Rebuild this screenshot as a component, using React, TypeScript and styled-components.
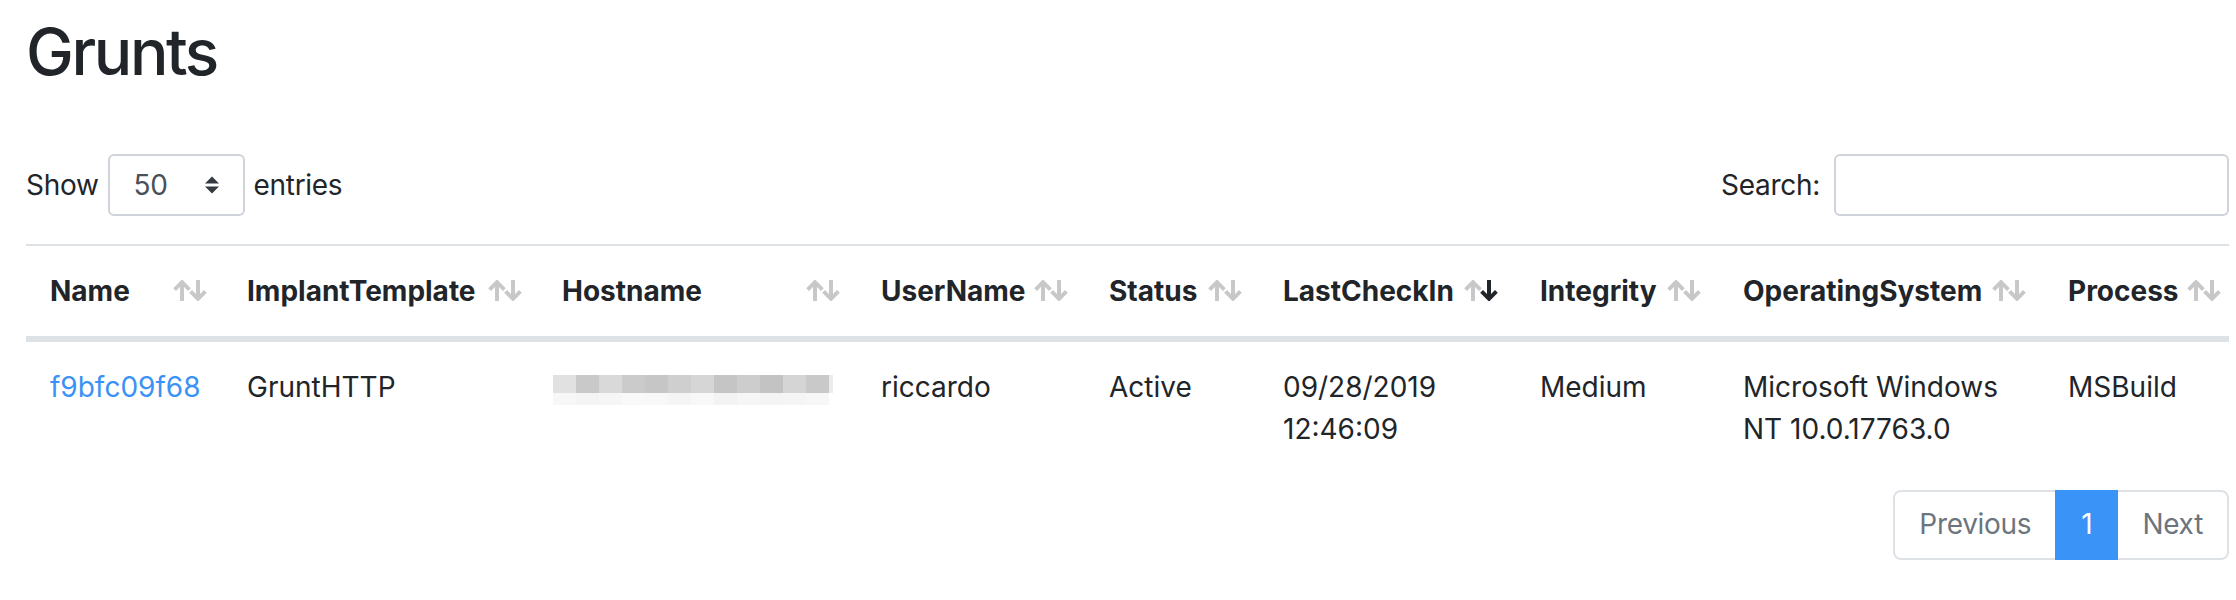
import React from "react";
import styled, { createGlobalStyle } from "styled-components";

const GlobalStyle = createGlobalStyle`
  html, body { margin: 0; padding: 0; background: #ffffff; }
  body {
    font-family: Inter, "Liberation Sans", sans-serif;
    color: #212529;
    font-size: 28px;
    line-height: 1.5;
  }
  * { box-sizing: border-box; }
`;

const Page = styled.div`
  padding: 14px 7px 40px 26px;
`;

const Title = styled.h1`
  margin: 0 0 63px;
  font-size: 64px;
  font-weight: 500;
  line-height: 1.2;
  letter-spacing: -2.4px;
  color: #212529;
`;

const Controls = styled.div`
  display: flex;
  justify-content: space-between;
  align-items: center;
  height: 62px;
  margin-bottom: 28px;
`;

const Label = styled.label<{ $gap: number }>`
  display: flex;
  align-items: center;
  gap: ${(p) => p.$gap}px;
  white-space: nowrap;
  font-weight: 400;
  letter-spacing: -0.3px;
`;

const SelectBox = styled.div`
  display: flex;
  align-items: center;
  justify-content: space-between;
  width: 137px;
  height: 62px;
  padding: 0 23px 0 24px;
  border: 2px solid #ced4da;
  border-radius: 6px;
  color: #495057;
  background: #fff;
`;

const SearchInput = styled.input`
  width: 395px;
  height: 62px;
  border: 2px solid #ced4da;
  border-radius: 6px;
  background: #fff;
  font: inherit;
  padding: 0 16px;
  outline: none;
`;

const Table = styled.table`
  width: 2203px;
  table-layout: fixed;
  border-collapse: separate;
  border-spacing: 0;
  color: #212529;
`;

const HeadCell = styled.th`
  position: relative;
  text-align: left;
  font-weight: 700;
  white-space: nowrap;
  vertical-align: bottom;
  padding: 24px 60px 24px 24px;
  line-height: 42px;
  border-top: 2px solid #dee2e6;
  border-bottom: 4px solid #dee2e6;
`;

const BodyCell = styled.td`
  vertical-align: top;
  padding: 24px;
  line-height: 42px;
  border-top: 2px solid #dee2e6;
`;

const SortIcon = styled.svg<{ $right: number }>`
  position: absolute;
  top: 34px;
  right: ${(p) => p.$right}px;
  width: 34px;
  height: 21px;
`;

const Link = styled.a`
  color: #3a92f4;
  text-decoration: none;
`;

const Blur = styled.svg`
  display: block;
  margin: 9px 0 0 -9px;
`;

const Footer = styled.div`
  display: flex;
  justify-content: flex-end;
  margin-top: 16px;
`;

const Pager = styled.ul`
  display: flex;
  margin: 0;
  padding: 0;
  list-style: none;
`;

const PageLink = styled.li<{ $active?: boolean; $pos?: "first" | "last" }>`
  display: flex;
  align-items: center;
  height: 70px;
  padding: 0 24px;
  line-height: 1.25;
  letter-spacing: -0.3px;
  color: ${(p) => (p.$active ? "#ffffff" : "#6c757d")};
  background: ${(p) => (p.$active ? "#3a93f6" : "#ffffff")};
  border: 2px solid ${(p) => (p.$active ? "#3a93f6" : "#dee2e6")};
  margin-left: ${(p) => (p.$pos === "first" ? "0" : "-2px")};
  border-radius: ${(p) =>
    p.$pos === "first" ? "8px 0 0 8px" : p.$pos === "last" ? "0 8px 8px 0" : "0"};
  position: relative;
  z-index: ${(p) => (p.$active ? 1 : 0)};
`;

const Arrows = () => (
  <svg width="16" height="18" viewBox="0 0 16 18">
    <path d="M1 7.5 L8 0.5 L15 7.5 Z" fill="#343a40" />
    <path d="M1 10.5 L8 17.5 L15 10.5 Z" fill="#343a40" />
  </svg>
);

const Sort = ({ right, active }: { right: number; active?: boolean }) => (
  <SortIcon $right={right} viewBox="0 0 34 21">
    <g fill="none" strokeWidth="4" strokeLinejoin="miter">
      <g stroke="#c8c8c8">
        <path d="M9 2.5 V21" />
        <path d="M1.6 9.6 L9 2.2 L16.4 9.6" />
      </g>
      <g stroke={active ? "#212529" : "#c8c8c8"}>
        <path d="M25 0 V18.5" />
        <path d="M17.6 11.4 L25 18.8 L32.4 11.4" />
      </g>
    </g>
  </SortIcon>
);

const topShades = ["#e1e1e1", "#c9c9c9", "#d9d9d9", "#cbcbcb", "#c6c6c6", "#cfcfcf", "#d6d6d6", "#c5c5c5", "#cdcdcd", "#c3c3c3", "#d5d5d5", "#c9c9c9", "#ececec"];
const bottomShades = ["#f7f7f7", "#f4f4f4", "#f6f6f6", "#f9f9f9", "#f8f8f8", "#f5f5f5", "#f8f8f8", "#f3f3f3", "#f6f6f6", "#f4f4f4", "#f5f5f5", "#f7f7f7", "#ffffff"];

const HostBlur = () => (
  <Blur width="280" height="30" viewBox="0 0 280 30">
    {topShades.map((c, i) => (
      <rect key={"t" + i} x={i * 23} y={0} width={i === 12 ? 4 : 23} height={18} fill={c} />
    ))}
    {bottomShades.map((c, i) => (
      <rect key={"b" + i} x={i * 23} y={18} width={i === 12 ? 4 : 23} height={12} fill={c} />
    ))}
  </Blur>
);

const columns: { name: string; width: number; right: number; active?: boolean }[] = [
  { name: "Name", width: 197, right: 16 },
  { name: "ImplantTemplate", width: 315, right: 16 },
  { name: "Hostname", width: 319, right: 17 },
  { name: "UserName", width: 228, right: 17 },
  { name: "Status", width: 174, right: 17 },
  { name: "LastCheckIn", width: 257, right: 18, active: true },
  { name: "Integrity", width: 203, right: 18 },
  { name: "OperatingSystem", width: 325, right: 18 },
  { name: "Process", width: 185, right: 8 },
];

export default function App() {
  return (
    <>
      <GlobalStyle />
      <Page>
        <Title>Grunts</Title>
        <Controls>
          <Label $gap={9}>
            Show
            <SelectBox>
              <span>50</span>
              <Arrows />
            </SelectBox>
            entries
          </Label>
          <Label $gap={14}>
            Search:
            <SearchInput type="search" />
          </Label>
        </Controls>
        <Table>
          <colgroup>
            {columns.map((c) => (
              <col key={c.name} style={{ width: c.width }} />
            ))}
          </colgroup>
          <thead>
            <tr>
              {columns.map((c) => (
                <HeadCell key={c.name}>
                  {c.name}
                  <Sort right={c.right} active={c.active} />
                </HeadCell>
              ))}
            </tr>
          </thead>
          <tbody>
            <tr>
              <BodyCell>
                <Link href="#">f9bfc09f68</Link>
              </BodyCell>
              <BodyCell>GruntHTTP</BodyCell>
              <BodyCell>
                <HostBlur />
              </BodyCell>
              <BodyCell>riccardo</BodyCell>
              <BodyCell>Active</BodyCell>
              <BodyCell>09/28/2019 12:46:09</BodyCell>
              <BodyCell>Medium</BodyCell>
              <BodyCell>Microsoft Windows NT 10.0.17763.0</BodyCell>
              <BodyCell>MSBuild</BodyCell>
            </tr>
          </tbody>
        </Table>
        <Footer>
          <Pager>
            <PageLink $pos="first">Previous</PageLink>
            <PageLink $active>1</PageLink>
            <PageLink $pos="last">Next</PageLink>
          </Pager>
        </Footer>
      </Page>
    </>
  );
}
